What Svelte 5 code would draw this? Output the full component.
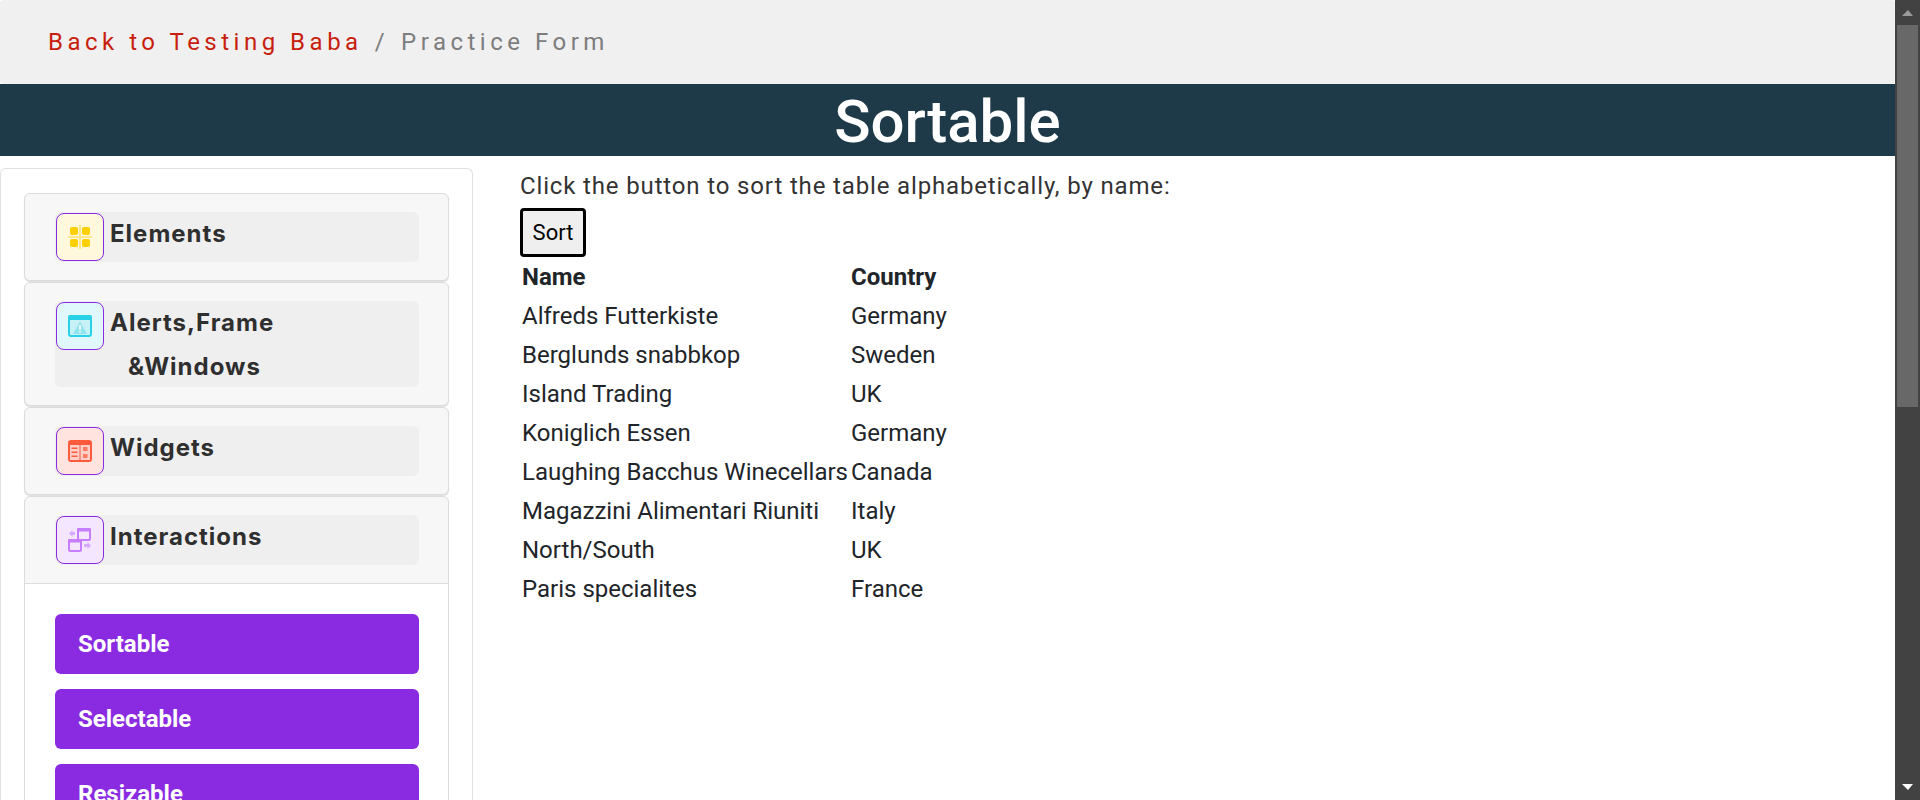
<script>
  const rows = [
    ["Alfreds Futterkiste", "Germany"],
    ["Berglunds snabbkop", "Sweden"],
    ["Island Trading", "UK"],
    ["Koniglich Essen", "Germany"],
    ["Laughing Bacchus Winecellars", "Canada"],
    ["Magazzini Alimentari Riuniti", "Italy"],
    ["North/South", "UK"],
    ["Paris specialites", "France"],
  ];
  const links = ["Sortable", "Selectable", "Resizable"];
</script>

<div class="page">
  <div class="content">
    <nav class="crumbs">
      <a href="#top">Back to Testing Baba</a>
      <span class="sep">/</span>
      <span class="current">Practice Form</span>
    </nav>
    <h1 class="title">Sortable</h1>

    <div class="columns">
      <aside class="sidebar">
        <div class="item">
          <div class="head">
            <span class="icon yellow">
              <svg viewBox="0 0 30 30" width="30" height="30">
                <path d="M3 14h24v2H3zM14 3h2v24h-2z" fill="#ffe68a" />
                <rect x="5" y="5" width="8" height="8" rx="2" fill="#ffcf00" />
                <rect x="17" y="5" width="8" height="8" rx="2" fill="#ffcf00" />
                <rect x="5" y="17" width="8" height="8" rx="2" fill="#ffcf00" />
                <rect x="17" y="17" width="8" height="8" rx="2" fill="#ffcf00" />
              </svg>
            </span>
            <span class="label">Elements</span>
          </div>
        </div>

        <div class="item">
          <div class="head">
            <span class="icon cyan">
              <svg viewBox="0 0 30 30" width="30" height="30">
                <rect x="4" y="5" width="22" height="20" rx="2" fill="#c5f1f7" stroke="#2ad0e6" stroke-width="2" />
                <rect x="3" y="4" width="24" height="5" rx="2" fill="#2ad0e6" />
                <path d="M15 10.500l7 12.500H8z" fill="#8fe4ef" />
                <path d="M14.200 14h1.600v5h-1.600zM14.200 20h1.600v1.600h-1.600z" fill="#fff" />
              </svg>
            </span>
            <span class="label">Alerts,Frame<span class="second">&amp;Windows</span></span>
          </div>
        </div>

        <div class="item">
          <div class="head">
            <span class="icon red">
              <svg viewBox="0 0 30 30" width="30" height="30">
                <rect x="3" y="4" width="24" height="22" rx="3" fill="#ff5a3c" />
                <rect x="5" y="9" width="9.500" height="15" fill="#ffd0c8" />
                <rect x="15.500" y="9" width="9.500" height="15" fill="#ffd0c8" />
                <path d="M6.500 11.500h6v1.500h-6zM6.500 15.500h6v1.500h-6zM6.500 19.500h6v1.500h-6z" fill="#ff5a3c" />
                <rect x="18" y="11" width="4.500" height="4" fill="#ff7a62" />
                <rect x="18" y="18" width="4.500" height="4" fill="#ff7a62" />
              </svg>
            </span>
            <span class="label">Widgets</span>
          </div>
        </div>

        <div class="item open">
          <div class="head">
            <span class="icon purple">
              <svg viewBox="0 0 30 30" width="30" height="30">
                <rect x="13" y="4" width="12" height="11" rx="1.500" fill="#f5e6ff" stroke="#c77dff" stroke-width="2" />
                <rect x="12" y="3" width="14" height="3.500" rx="1" fill="#c77dff" />
                <rect x="4" y="15" width="12" height="11" rx="1.500" fill="#f5e6ff" stroke="#c77dff" stroke-width="2" />
                <rect x="3" y="14" width="14" height="3.500" rx="1" fill="#c77dff" />
                <path d="M4 8.500l3.500-3.500v2H10v3H7.500v2z" fill="#d9a8ff" />
                <path d="M26 20.500l-3.500 3.500v-2H19v-3h3.500v-2z" fill="#d9a8ff" />
              </svg>
            </span>
            <span class="label">Interactions</span>
          </div>
          <div class="body">
            {#each links as link}
              <a class="link" href="#top">{link}</a>
            {/each}
          </div>
        </div>
      </aside>

      <main class="main">
        <p class="intro">Click the button to sort the table alphabetically, by name:</p>
        <button class="sort">Sort</button>
        <table>
          <thead>
            <tr>
              <th>Name</th>
              <th>Country</th>
            </tr>
          </thead>
          <tbody>
            {#each rows as row}
              <tr>
                <td>{row[0]}</td>
                <td>{row[1]}</td>
              </tr>
            {/each}
          </tbody>
        </table>
      </main>
    </div>
  </div>

  <div class="scrollbar">
    <span class="arrow up"></span>
    <span class="thumb"></span>
    <span class="arrow down"></span>
  </div>
</div>

<style>
  :global(body) {
    margin: 0;
    font-family: Roboto, "Liberation Sans", sans-serif;
    color: #212529;
    background: #fff;
  }

  .page {
    display: flex;
    height: 800px;
    overflow: hidden;
  }

  .content {
    flex: 1;
    min-width: 0;
  }

  .crumbs {
    height: 84px;
    box-sizing: border-box;
    padding-left: 48px;
    display: flex;
    align-items: center;
    gap: 12px;
    background: #f0f0f0;
    border-radius: 4px;
    font-size: 24px;
    letter-spacing: 4.500px;
  }

  .crumbs a {
    color: #c81e0e;
    text-decoration: none;
  }

  .sep,
  .current {
    color: #7d7d7d;
  }

  .title {
    margin: 0;
    height: 72px;
    line-height: 75px;
    background: #1e3a49;
    color: #fff;
    text-align: center;
    font-size: 60px;
    font-weight: 500;
  }

  .columns {
    display: flex;
  }

  .sidebar {
    width: 473px;
    box-sizing: border-box;
    margin-top: 12px;
    padding: 24px 23px 0 23px;
    border: 1px solid #e0e0e0;
    border-bottom: none;
    border-radius: 6px 6px 0 0;
    height: 700px;
    flex-shrink: 0;
    display: flex;
    flex-direction: column;
    gap: 1px;
  }

  .item {
    border: 1px solid #dcdcdc;
    border-radius: 6px;
    background: #f7f7f7;
    box-shadow: 0 1px 1px #ddd;
  }

  .head {
    margin: 18px 29px 18px 30px;
    padding: 1px;
    display: flex;
    background: #efefef;
    border-radius: 6px;
  }

  .icon {
    width: 48px;
    height: 48px;
    box-sizing: border-box;
    flex-shrink: 0;
    display: flex;
    align-items: center;
    justify-content: center;
    border: 1.500px solid #8a2be2;
    border-radius: 8px;
  }

  .yellow { background: #fff8dc; }
  .cyan { background: #e0f8fb; }
  .red { background: #ffe3df; }
  .purple { background: #f5e6ff; }

  .label {
    margin: -1px 0 -3px;
    padding-left: 6px;
    font-family: Inter, "Noto Sans", sans-serif;
    font-size: 24px;
    font-weight: 700;
    letter-spacing: 1px;
    line-height: 44px;
    color: #2f2f2f;
  }

  .second {
    display: block;
    padding-left: 18px;
  }

  .open {
    border-radius: 6px 6px 0 0;
    box-shadow: none;
  }

  .body {
    background: #fff;
    border-top: 1px solid #dcdcdc;
    padding: 30px 29px 30px 30px;
    display: flex;
    flex-direction: column;
    gap: 15px;
  }

  .link {
    height: 60px;
    flex-shrink: 0;
    box-sizing: border-box;
    padding-left: 23px;
    display: flex;
    align-items: center;
    background: #8a2be2;
    border-radius: 6px;
    color: #fff;
    text-decoration: none;
    font-size: 24px;
    font-weight: 700;
  }

  .main {
    padding: 0 0 0 47px;
  }

  .intro {
    margin: 0;
    padding-top: 14px;
    height: 33px;
    font-size: 24px;
    letter-spacing: 0.850px;
    line-height: 33px;
    color: #333;
  }

  .sort {
    display: block;
    width: 66px;
    height: 49px;
    margin-top: 5px;
    padding: 0;
    background: #efefef;
    border: 3px solid #000;
    border-radius: 4px;
    font-family: Roboto, sans-serif;
    font-size: 22px;
    color: #000;
  }

  table {
    border-collapse: collapse;
    margin-top: 1px;
  }

  th,
  td {
    height: 39px;
    padding: 0 1px 0 2px;
    text-align: left;
    font-size: 24px;
    line-height: 33px;
  }

  th {
    font-weight: 700;
  }

  .scrollbar {
    width: 25px;
    flex-shrink: 0;
    background: #424242;
    position: relative;
  }

  .thumb {
    position: absolute;
    left: 2px;
    top: 25px;
    width: 21px;
    height: 382px;
    background: #686868;
  }

  .arrow {
    position: absolute;
    left: 7px;
    width: 0;
    height: 0;
    border-left: 6px solid transparent;
    border-right: 5px solid transparent;
  }

  .up {
    top: 10px;
    border-bottom: 6px solid #9a9a9a;
  }

  .down {
    top: 784px;
    border-top: 6px solid #fff;
  }
</style>
